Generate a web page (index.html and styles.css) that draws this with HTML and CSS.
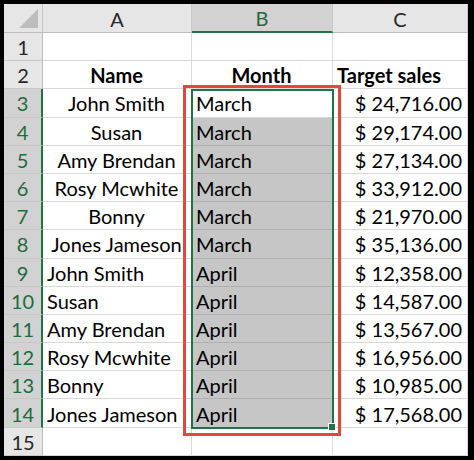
FILE: index.html
```html
<!DOCTYPE html>
<html>
<head>
<meta charset="utf-8">
<link rel="stylesheet" href="styles.css">
</head>
<body>
<div class="frame">
  <div class="stack">
    <div class="sheet">
      <div class="corner"><span class="tri"></span></div>
      <div class="colhead">A</div>
      <div class="colhead sel">B</div>
      <div class="colhead">C</div>

      <div class="rowhead">1</div><div class="cell"></div><div class="cell"></div><div class="cell"></div>

      <div class="rowhead">2</div><div class="cell center bold">Name</div><div class="cell center bold">Month</div><div class="cell left bold">Target sales</div>

      <div class="rowhead sel">3</div><div class="cell center">John Smith</div><div class="cell left">March</div><div class="cell right">$ 24,716.00</div>
      <div class="rowhead sel">4</div><div class="cell center">Susan</div><div class="cell left fill">March</div><div class="cell right">$ 29,174.00</div>
      <div class="rowhead sel">5</div><div class="cell center">Amy Brendan</div><div class="cell left fill">March</div><div class="cell right">$ 27,134.00</div>
      <div class="rowhead sel">6</div><div class="cell center">Rosy Mcwhite</div><div class="cell left fill">March</div><div class="cell right">$ 33,912.00</div>
      <div class="rowhead sel">7</div><div class="cell center">Bonny</div><div class="cell left fill">March</div><div class="cell right">$ 21,970.00</div>
      <div class="rowhead sel">8</div><div class="cell center">Jones Jameson</div><div class="cell left fill">March</div><div class="cell right">$ 35,136.00</div>
      <div class="rowhead sel">9</div><div class="cell left">John Smith</div><div class="cell left fill">April</div><div class="cell right">$ 12,358.00</div>
      <div class="rowhead sel">10</div><div class="cell left">Susan</div><div class="cell left fill">April</div><div class="cell right">$ 14,587.00</div>
      <div class="rowhead sel">11</div><div class="cell left">Amy Brendan</div><div class="cell left fill">April</div><div class="cell right">$ 13,567.00</div>
      <div class="rowhead sel">12</div><div class="cell left">Rosy Mcwhite</div><div class="cell left fill">April</div><div class="cell right">$ 16,956.00</div>
      <div class="rowhead sel">13</div><div class="cell left">Bonny</div><div class="cell left fill">April</div><div class="cell right">$ 10,985.00</div>
      <div class="rowhead sel">14</div><div class="cell left">Jones Jameson</div><div class="cell left fill">April</div><div class="cell right">$ 17,568.00</div>

      <div class="rowhead">15</div><div class="cell"></div><div class="cell"></div><div class="cell"></div>
    </div>
    <div class="overlay">
      <div class="selection"><span class="handle"></span></div>
      <div class="highlight"></div>
    </div>
  </div>
</div>
</body>
</html>
```

FILE: styles.css
```css
html, body {
  margin: 0;
  padding: 0;
  background: #000;
}
.frame {
  width: 474px;
  height: 460px;
  padding: 4px 6px 0 4px;
  box-sizing: border-box;
  overflow: hidden;
}
.stack {
  display: grid;
}
.sheet, .overlay {
  grid-area: 1 / 1;
  display: grid;
  grid-template-columns: 39px 149px 141px 135px;
  grid-template-rows: 29px repeat(15, 28.2px);
}
.overlay {
  pointer-events: none;
}
.sheet {
  background: #fff;
  font-family: Lato, "Liberation Sans", sans-serif;
  font-size: 20px;
  color: #000;
}
.corner {
  background: #e6e6e6;
  border-right: 1px solid #c4c4c4;
  border-bottom: 1px solid #bdbdbd;
  position: relative;
}
.tri {
  position: absolute;
  right: 4px;
  bottom: 4px;
  width: 0;
  height: 0;
  border-left: 19px solid transparent;
  border-bottom: 19px solid #bdbdbd;
}
.colhead {
  background: #e6e6e6;
  border-right: 1px solid #c8c8c8;
  border-bottom: 1px solid #bdbdbd;
  display: flex;
  align-items: center;
  justify-content: center;
  color: #262626;
  padding-top: 1px;
  box-sizing: border-box;
}
.colhead.sel {
  background: #d2d2d2;
  color: #1e6b3f;
  border-bottom: 2px solid #217346;
}
.rowhead {
  background: #e6e6e6;
  border-right: 1px solid #bdbdbd;
  border-bottom: 1px solid #c8c8c8;
  display: flex;
  align-items: center;
  justify-content: center;
  color: #262626;
  box-sizing: border-box;
  padding-top: 1px;
}
.rowhead.sel {
  background: #d2d2d2;
  color: #1e6b3f;
  border-right: 2px solid #217346;
}
.cell {
  border-right: 1px solid #d9d9d9;
  border-bottom: 1px solid #d9d9d9;
  display: flex;
  align-items: center;
  white-space: nowrap;
  box-sizing: border-box;
  padding: 1px 5px 0 4px;
  overflow: visible;
}
.center { justify-content: center; }
.left { justify-content: flex-start; }
.right { justify-content: flex-end; }
.bold { font-weight: bold; }
.fill {
  background: #c6c6c6;
  border-right-color: #b0b0b0;
  border-bottom-color: #b0b0b0;
}
.selection {
  grid-column: 3;
  grid-row: 4 / 16;
  border: 2px solid #217346;
  margin: 0 -1px -1px -1px;
  position: relative;
}
.handle {
  position: absolute;
  right: -4px;
  bottom: -4px;
  width: 6px;
  height: 6px;
  background: #217346;
  border: 1px solid #fff;
}
.highlight {
  grid-column: 3;
  grid-row: 4 / 16;
  border: 3px solid #e0483d;
  margin: -4px -8px -8px -9px;
}
```
